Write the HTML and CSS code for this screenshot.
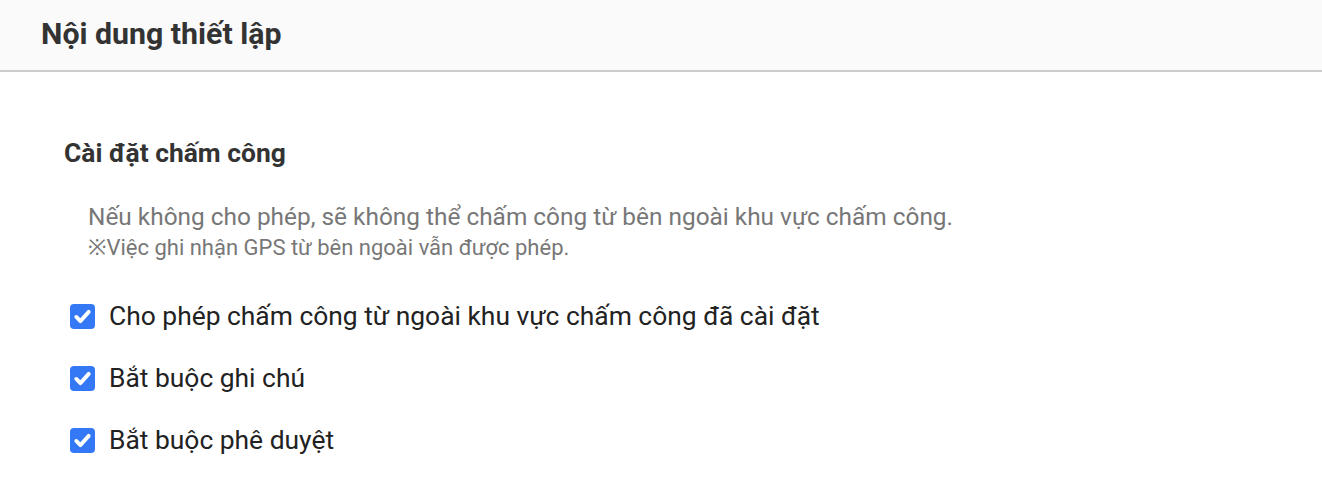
FILE: index.html
```html
<!DOCTYPE html>
<html lang="vi">
<head>
<meta charset="utf-8">
<title>Nội dung thiết lập</title>
<link rel="stylesheet" href="styles.css">
</head>
<body>
<header class="page-header">
  <h1 class="page-title">Nội dung thiết lập</h1>
</header>
<main class="content">
  <section class="section">
    <h2 class="section-title">Cài đặt chấm công</h2>
    <div class="note">
      <p class="note-main">Nếu không cho phép, sẽ không thể chấm công từ bên ngoài khu vực chấm công.</p>
      <p class="note-sub">※Việc ghi nhận GPS từ bên ngoài vẫn được phép.</p>
    </div>
    <ul class="options">
      <li class="option">
        <span class="checkbox"><svg viewBox="0 0 24 24"><path d="M5.5 12.5l4.3 4.3 8.7-9.6" fill="none" stroke="#fff" stroke-width="4" stroke-linecap="round" stroke-linejoin="round"/></svg></span>
        <span class="option-label">Cho phép chấm công từ ngoài khu vực chấm công đã cài đặt</span>
      </li>
      <li class="option">
        <span class="checkbox"><svg viewBox="0 0 24 24"><path d="M5.5 12.5l4.3 4.3 8.7-9.6" fill="none" stroke="#fff" stroke-width="4" stroke-linecap="round" stroke-linejoin="round"/></svg></span>
        <span class="option-label">Bắt buộc ghi chú</span>
      </li>
      <li class="option">
        <span class="checkbox"><svg viewBox="0 0 24 24"><path d="M5.5 12.5l4.3 4.3 8.7-9.6" fill="none" stroke="#fff" stroke-width="4" stroke-linecap="round" stroke-linejoin="round"/></svg></span>
        <span class="option-label">Bắt buộc phê duyệt</span>
      </li>
    </ul>
  </section>
</main>
</body>
</html>
```
FILE: styles.css
```css
* { box-sizing: border-box; }
html, body { margin: 0; padding: 0; background: #fff; }
body { font-family: Roboto, "Noto Sans", sans-serif; color: #333; }

.page-header {
  height: 72px;
  background: #fafafa;
  border-bottom: 2px solid #cccccc;
  display: flex;
  align-items: center;
  padding: 0 41px;
}
.page-title {
  margin: 0;
  font-size: 30.3px;
  font-weight: 700;
  color: #333;
  line-height: 36px;
  padding-bottom: 2px;
}

.content { padding: 0 64px; }
.section { padding-top: 65px; }
.section-title {
  margin: 0;
  font-size: 26.4px;
  font-weight: 700;
  color: #333;
  line-height: 32px;
}
.note { padding-left: 24px; margin-top: 32px; }
.note p { margin: 0; color: #777; }
.note-main { font-size: 24.4px; line-height: 32px; }
.note-sub { font-size: 22px; line-height: 28px; margin-top: 1px !important; }

.options { list-style: none; margin: 36px 0 0; padding: 0; display: flex; flex-direction: column; gap: 26px; }
.option { display: flex; align-items: center; gap: 14px; padding-left: 6px; height: 36px; }
.checkbox {
  width: 25px; height: 25px;
  border-radius: 4px;
  background: #3478f6;
  display: flex; align-items: center; justify-content: center;
  flex: none;
}
.checkbox svg { width: 23px; height: 23px; }
.option-label { font-size: 26.4px; color: #222; line-height: 36px; }
```
